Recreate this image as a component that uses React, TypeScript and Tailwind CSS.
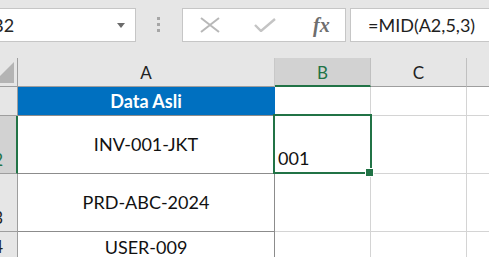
const GREEN = "#217346";

function Toolbar() {
  return (
    <div className="h-[58px] shrink-0 bg-[#e6e6e6] flex items-start pt-[8px]">
      <div className="w-[136px] h-[34px] bg-white border-y border-r border-[#c6c6c6] flex items-center overflow-hidden">
        <span className="ml-[-8px] text-[18px] text-[#262626] leading-none whitespace-nowrap">B2</span>
        <div className="flex-1" />
        <svg width="8" height="5" className="mr-[10px]">
          <polygon points="0,0 8,0 4,5" fill="#6b6b6b" />
        </svg>
      </div>
      <div className="ml-[21px] mt-[9px] flex flex-col gap-[3px]">
        <div className="w-[3px] h-[3px] bg-[#a6a6a6]" />
        <div className="w-[3px] h-[3px] bg-[#a6a6a6]" />
        <div className="w-[3px] h-[3px] bg-[#a6a6a6]" />
      </div>
      <div className="ml-[22px] w-[164px] h-[34px] bg-white border border-[#c6c6c6] flex items-center">
        <svg width="20" height="16" className="ml-[17px]">
          <path d="M1 1 L19 15 M19 1 L1 15" stroke="#b8b8b8" strokeWidth="2" fill="none" />
        </svg>
        <svg width="22" height="14" className="ml-[34px]">
          <path d="M1 7 L7 13 L21 1" stroke="#c4c4c4" strokeWidth="2.4" fill="none" />
        </svg>
        <span className="ml-[37px] text-[20px] italic font-bold text-[#6e6e6e] leading-none font-['Liberation_Serif',serif]">
          fx
        </span>
      </div>
      <div className="ml-[4px] flex-1 h-[34px] bg-white border-y border-l border-[#c6c6c6] flex items-center pl-[17px]">
        <span className="text-[18px] text-[#1f1f1f] leading-none whitespace-nowrap">=MID(A2,5,3)</span>
      </div>
    </div>
  );
}

function RowHead({ n, active }: { n: string; active?: boolean }) {
  return (
    <div
      className={
        active
          ? "bg-[#d2d2d2] border-r-2 border-r-[#217346] border-b border-b-[#9e9e9e] flex items-end justify-end overflow-hidden pr-[13px] pb-[5px]"
          : "bg-[#e6e6e6] border-r border-b border-[#9e9e9e] flex items-end justify-end overflow-hidden pr-[14px] pb-[5px]"
      }
    >
      <span className={active ? "text-[17px] leading-none text-[#217346]" : "text-[17px] leading-none text-[#222]"}>{n}</span>
    </div>
  );
}

function Sheet() {
  return (
    <div className="flex-1 min-h-0 grid grid-cols-[18px_257px_96px_96px_1fr] grid-rows-[29px_29px_58px_58px_1fr]">
      {/* header row */}
      <div className="bg-[#e6e6e6] border-r border-b border-[#9e9e9e] flex items-end justify-end overflow-hidden pr-[3px] pb-[3px]">
        <svg width="21" height="21" className="shrink-0">
          <polygon points="21,0 21,21 0,21" fill="#b4b4b4" />
        </svg>
      </div>
      <div className="bg-[#e6e6e6] border-r border-r-[#c8c8c8] border-b border-b-[#9e9e9e] flex items-center justify-center pt-[2px] text-[17px] text-[#222]">
        A
      </div>
      <div className="bg-[#d2d2d2] border-r border-r-[#c0c0c0] border-b-2 border-b-[#217346] flex items-center justify-center pt-[3px] text-[17px] text-[#217346]">
        B
      </div>
      <div className="bg-[#e6e6e6] border-r border-r-[#c0c0c0] border-b border-b-[#9e9e9e] flex items-center justify-center pt-[2px] text-[17px] text-[#222]">
        C
      </div>
      <div className="bg-[#e6e6e6] border-b border-b-[#9e9e9e]" />

      {/* row 1 */}
      <div className="bg-[#e6e6e6] border-r border-b border-[#9e9e9e] flex items-end justify-end overflow-hidden pr-[17px] pb-[5px]">
        <span className="text-[17px] leading-none text-[#222]">1</span>
      </div>
      <div className="bg-[#0070c0] border-r border-r-[#0070c0] border-b border-b-[#8c8c8c] flex items-center justify-center text-[18px] font-bold text-white">
        Data Asli
      </div>
      <div className="border-r border-b border-[#d4d4d4]" />
      <div className="border-r border-b border-[#d4d4d4]" />
      <div className="border-b border-[#d4d4d4]" />

      {/* row 2 */}
      <RowHead n="2" active />
      <div className="border-r border-b border-[#8c8c8c] flex items-center justify-center text-[18px] text-[#111]">
        INV-001-JKT
      </div>
      <div className="relative border-r border-b border-[#d4d4d4] flex items-end pl-[3px] pb-[1px] text-[18px] text-[#111]">
        001
        <div className="absolute left-[-2px] top-[-2px] right-[-2px] bottom-[-1px] border-2" style={{ borderColor: GREEN }} />
        <div className="absolute left-[90px] top-[52px] w-[9px] h-[9px] border border-white" style={{ background: GREEN }} />
      </div>
      <div className="border-r border-b border-[#d4d4d4]" />
      <div className="border-b border-[#d4d4d4]" />

      {/* row 3 */}
      <RowHead n="3" />
      <div className="border-r border-b border-[#8c8c8c] flex items-center justify-center text-[18px] text-[#111]">
        PRD-ABC-2024
      </div>
      <div className="border-r border-b border-[#d4d4d4]" />
      <div className="border-r border-b border-[#d4d4d4]" />
      <div className="border-b border-[#d4d4d4]" />

      {/* row 4 */}
      <RowHead n="4" />
      <div className="border-r border-[#8c8c8c] flex items-start justify-center pt-[2px] text-[18px] text-[#111]">
        USER-009
      </div>
      <div className="border-r border-[#d4d4d4]" />
      <div className="border-r border-[#d4d4d4]" />
      <div />
    </div>
  );
}

export default function App() {
  return (
    <div className="w-[489px] h-[257px] overflow-hidden bg-white flex flex-col font-['Lato',sans-serif]">
      <Toolbar />
      <Sheet />
    </div>
  );
}
